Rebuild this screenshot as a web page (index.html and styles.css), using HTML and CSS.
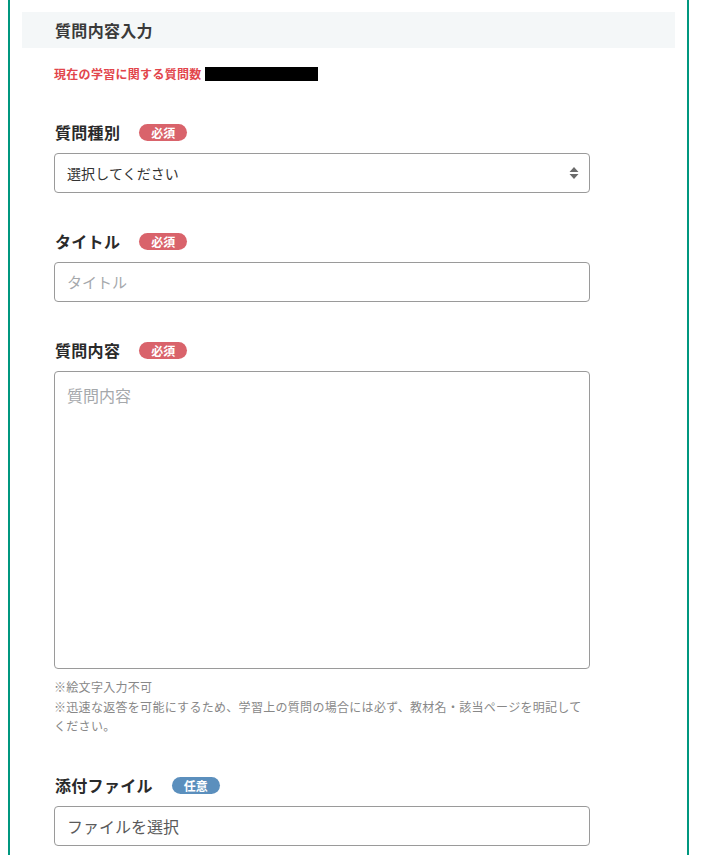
FILE: index.html
```html
<!DOCTYPE html>
<html lang="ja">
<head>
<meta charset="utf-8">
<title>質問内容入力</title>
<link rel="stylesheet" href="styles.css">
</head>
<body>
<div class="frame">
  <div class="band"><h2 class="band-title">質問内容入力</h2></div>
  <div class="form">
    <p class="count">現在の学習に関する質問数<span class="mask"></span></p>

    <div class="group">
      <div class="label-row"><span class="label">質問種別</span><span class="badge req">必須</span></div>
      <div class="select">
        <span class="select-text">選択してください</span>
        <svg class="arrows" width="10" height="14" viewBox="0 0 10 14"><path d="M5 1 L9.5 6 H0.5 Z M5 13 L9.5 8 H0.5 Z" fill="#6b6b6b"/></svg>
      </div>
    </div>

    <div class="group">
      <div class="label-row"><span class="label">タイトル</span><span class="badge req">必須</span></div>
      <input class="input" type="text" placeholder="タイトル">
    </div>

    <div class="group">
      <div class="label-row"><span class="label">質問内容</span><span class="badge req">必須</span></div>
      <textarea class="textarea" placeholder="質問内容"></textarea>
      <p class="notes">※絵文字入力不可<br>※迅速な返答を可能にするため、学習上の質問の場合には必ず、教材名・該当ページを明記してください。</p>
    </div>

    <div class="group group-last">
      <div class="label-row"><span class="label">添付ファイル</span><span class="badge opt">任意</span></div>
      <div class="file">ファイルを選択</div>
    </div>
  </div>
</div>
</body>
</html>
```
FILE: styles.css
```css
html, body {
  margin: 0;
  padding: 0;
  background: #fff;
}
body {
  font-family: "Noto Sans CJK JP", "Noto Sans", sans-serif;
  color: #333;
  overflow: hidden;
  height: 855px;
}
.frame {
  margin-left: 8px;
  width: 677px;
  min-height: 900px;
  border-left: 2px solid #00977f;
  border-right: 2px solid #00977f;
  padding: 12px 0 0;
}
.band {
  margin: 0 12px;
  height: 36px;
  background: #f4f7f8;
  display: flex;
  align-items: center;
  padding-left: 33px;
}
.band-title {
  margin: 0;
  font-size: 16px;
  font-weight: bold;
  color: #3a3a3a;
  letter-spacing: 0.02em;
  line-height: 20px;
}
.form {
  padding-left: 44px;
  width: 536px;
}
.count {
  margin: 17px 0 0;
  font-size: 12px;
  line-height: 18px;
  font-weight: bold;
  color: #e2454b;
  letter-spacing: 0.3px;
  display: flex;
  align-items: center;
}
.mask {
  display: inline-block;
  width: 113px;
  height: 14px;
  background: #000;
  margin-left: 3px;
}
.group {
  margin-top: 36px;
}
.group:nth-of-type(1) { margin-top: 36.5px; }
.group-last { margin-top: 37px; }
.label-row {
  height: 26px;
  display: flex;
  align-items: center;
  margin-bottom: 7px;
  padding-left: 1px;
}
.label {
  font-size: 16px;
  font-weight: bold;
  color: #2a2a2a;
  letter-spacing: 0.3px;
  line-height: 24px;
  margin-top: -2px;
}
.badge {
  margin-left: 19px;
  width: 48px;
  height: 17px;
  border-radius: 9px;
  color: #fff;
  font-size: 12px;
  font-weight: bold;
  line-height: 17px;
  text-align: center;
}
.req { background: #d9636b; }
.opt { background: #5b8fbd; }
.select, .input, .file {
  box-sizing: border-box;
  width: 536px;
  height: 40px;
  border: 1px solid #9a9a9a;
  border-radius: 4px;
  background: #fff;
  display: flex;
  align-items: center;
  padding: 0 12px;
  margin: 0;
  font-family: inherit;
}
.select {
  justify-content: space-between;
  padding-right: 10px;
}
.select-text {
  font-size: 14px;
  color: #333;
  letter-spacing: 0.1px;
}
.input {
  font-size: 15px;
  color: #333;
  outline: none;
}
.input::placeholder, .textarea::placeholder {
  color: #a5a8ab;
}
.textarea {
  display: block;
  box-sizing: border-box;
  width: 536px;
  height: 298px;
  border: 1px solid #9a9a9a;
  border-radius: 4px;
  padding: 11px 12px;
  margin: 0;
  font-family: inherit;
  font-size: 16px;
  line-height: 24px;
  resize: none;
  outline: none;
}
.notes {
  margin: 8.5px 0 0;
  font-size: 12px;
  line-height: 19.5px;
  color: #888;
  letter-spacing: 0.3px;
}
.file {
  font-size: 16px;
  color: #5a5a5a;
}
```
